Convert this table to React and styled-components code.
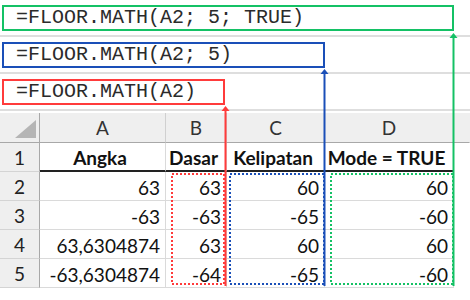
import React from 'react';
import styled, { createGlobalStyle } from 'styled-components';

const GlobalStyle = createGlobalStyle`
  body {
    margin: 0;
    background: #fff;
  }
`;

const GREEN = '#14c165';
const BLUE = '#1a4fb8';
const RED = '#ff3b3b';

const Page = styled.div`
  position: relative;
  width: 470px;
  height: 300px;
  overflow: hidden;
  background: #fff;
`;

const FormulaRow = styled.div`
  height: 35px;
  border-bottom: 2px solid #dedede;
  display: flex;
  align-items: center;
  padding-left: 2px;
`;

const FormulaBox = styled.div`
  box-sizing: border-box;
  width: ${p => p.$w}px;
  height: 26px;
  border: 2px solid ${p => p.$color};
  display: flex;
  align-items: center;
  padding-left: 12px;
  font-family: "Liberation Mono", "DejaVu Sans Mono", monospace;
  font-size: 20px;
  color: #2b2b2b;
  white-space: pre;
`;

const Sheet = styled.div`
  margin-top: 2px;
  display: grid;
  grid-template-columns: 40px 126px 61px 98px 129px 16px;
  grid-template-rows: 30px repeat(5, 29px);
  font-family: Lato, "Liberation Sans", sans-serif;
  font-size: 19px;
  color: #111;
`;

const Corner = styled.div`
  position: relative;
  background: #efefef;
  border-right: 1px solid #a8a8a8;
  border-bottom: 1px solid #a8a8a8;
`;

const Triangle = styled.div`
  position: absolute;
  left: 15px;
  top: 7px;
  width: 21px;
  height: 18px;
  background: #b5b5b5;
  clip-path: polygon(100% 0, 100% 100%, 0 100%);
`;

const ColHead = styled.div`
  background: #efefef;
  border-right: 1px solid ${p => (p.$last ? 'transparent' : '#d0d0d0')};
  border-bottom: 1px solid #a8a8a8;
  display: flex;
  align-items: center;
  justify-content: center;
  color: #333;
`;

const RowNum = styled.div`
  background: #efefef;
  border-right: 1px solid #a8a8a8;
  border-bottom: 1px solid #d4d4d4;
  display: flex;
  align-items: center;
  justify-content: center;
  color: #222;
`;

const Cell = styled.div`
  border-right: 1px solid ${p => (p.$blank ? 'transparent' : '#dadada')};
  border-bottom: ${p => (p.$title ? '2px solid #222' : p.$blank ? '1px solid transparent' : '1px solid #dadada')};
  display: flex;
  align-items: center;
  justify-content: ${p => (p.$title ? 'center' : 'flex-end')};
  padding: 2px 5px 0 0;
  font-weight: ${p => (p.$title ? 700 : 400)};
  white-space: nowrap;
  overflow: visible;
`;

const Overlay = styled.svg`
  position: absolute;
  left: 0;
  top: 0;
  pointer-events: none;
`;

const formulas = [
  { text: '=FLOOR.MATH(A2; 5; TRUE)', w: 452, color: GREEN },
  { text: '=FLOOR.MATH(A2; 5)', w: 323, color: BLUE },
  { text: '=FLOOR.MATH(A2)', w: 223, color: RED },
];

const rows = [
  ['Angka', 'Dasar', 'Kelipatan', 'Mode = TRUE'],
  ['63', '63', '60', '60'],
  ['-63', '-63', '-65', '-60'],
  ['63,6304874', '63', '60', '60'],
  ['-63,6304874', '-64', '-65', '-60'],
];

const arrows = [
  { x: 225.5, y: 106, color: RED },
  { x: 324.5, y: 69, color: BLUE },
  { x: 453.5, y: 33, color: GREEN },
];

const dotted = [
  { x: 172, w: 52, color: RED },
  { x: 230, w: 94, color: BLUE },
  { x: 331, w: 122, color: GREEN },
];

export default function App() {
  return (
    <Page>
      <GlobalStyle />
      {formulas.map(f => (
        <FormulaRow key={f.text}>
          <FormulaBox $w={f.w} $color={f.color}>{f.text}</FormulaBox>
        </FormulaRow>
      ))}
      <Sheet>
        <Corner><Triangle /></Corner>
        {['A', 'B', 'C', 'D'].map(l => <ColHead key={l}>{l}</ColHead>)}
        <ColHead $last />
        {rows.map((r, i) => (
          <React.Fragment key={i}>
            <RowNum>{i + 1}</RowNum>
            {r.map((v, j) => (
              <Cell key={j} $title={i === 0}>{v}</Cell>
            ))}
            <Cell $blank />
          </React.Fragment>
        ))}
      </Sheet>
      <Overlay width="470" height="300">
        {dotted.map(d => (
          <rect
            key={d.color}
            x={d.x}
            y={174}
            width={d.w}
            height={110}
            fill="none"
            stroke={d.color}
            strokeWidth="2"
            strokeDasharray="2 2"
          />
        ))}
        {arrows.map(a => (
          <g key={a.color}>
            <line x1={a.x} y1={a.y + 3} x2={a.x} y2={286} stroke={a.color} strokeWidth="2" />
            <polygon
              points={`${a.x},${a.y} ${a.x - 4},${a.y + 5} ${a.x + 4},${a.y + 5}`}
              fill={a.color}
            />
          </g>
        ))}
      </Overlay>
    </Page>
  );
}
